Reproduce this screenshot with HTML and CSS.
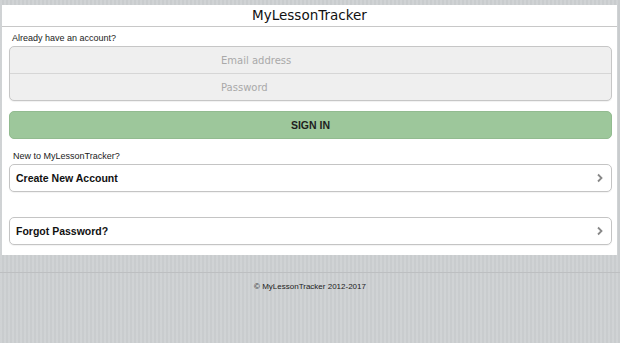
FILE: index.html
```html
<!DOCTYPE html>
<html lang="en">
<head>
<meta charset="UTF-8">
<meta name="viewport" content="width=device-width, initial-scale=1.0">
<title>MyLessonTracker</title>
<link rel="stylesheet" href="styles.css">
</head>
<body>
    <div class="page">
        <div class="header">
            <h1>MyLessonTracker</h1>
        </div>
        <div class="content">
            <p class="label">Already have an account?</p>
            <div class="input-group">
                <input type="text" class="field" placeholder="Email address">
                <input type="password" class="field" placeholder="Password">
            </div>
            <button class="btn-signin">SIGN IN</button>

            <p class="label label-new">New to MyLessonTracker?</p>
            <a class="list-btn" href="#">
                <span>Create New Account</span>
                <svg width="8" height="10" viewBox="0 0 8 10"><polyline points="2,1.5 5.5,5 2,8.5" fill="none" stroke="#888" stroke-width="1.8"/></svg>
            </a>
            <a class="list-btn list-btn-forgot" href="#">
                <span>Forgot Password?</span>
                <svg width="8" height="10" viewBox="0 0 8 10"><polyline points="2,1.5 5.5,5 2,8.5" fill="none" stroke="#888" stroke-width="1.8"/></svg>
            </a>
        </div>
    </div>
    <div class="footer">
        <p>&copy; MyLessonTracker 2012-2017</p>
    </div>
</body>
</html>
```

FILE: styles.css
```css
html, body{
    margin: 0;
    padding: 0;
}
body{
    background: #cdd0d2;
    background-image: repeating-linear-gradient(90deg, rgba(255,255,255,0.06) 0 2px, rgba(0,0,0,0.02) 2px 4px);
    font-family: "Liberation Sans", Arial, sans-serif;
    color: #222;
    height: 343px;
    overflow: hidden;
}
.page{
    background: #fff;
    margin: 5px 3px 0 2px;
    height: 250px;
}
.header{
    height: 21px;
    border-bottom: 1px solid #c8c8c8;
    text-align: center;
}
.header h1{
    margin: 0;
    font-family: "DejaVu Sans", sans-serif;
    font-weight: normal;
    font-size: 13.5px;
    line-height: 20px;
    color: #111;
}
.content{
    padding: 0 5px 0 7px;
}
.label{
    margin: 0;
    font-size: 9px;
    line-height: 11px;
    padding: 6px 0 2px 3px;
    color: #222;
}
.input-group{
    border: 1px solid #c6c6c6;
    border-radius: 5px;
    background: #efefef;
    overflow: hidden;
    box-shadow: 0 1px 1px rgba(0,0,0,0.06);
}
.field{
    display: block;
    width: 100%;
    box-sizing: border-box;
    height: 26px;
    padding: 0 0 0 211px;
    border: 0;
    background: transparent;
    text-align: left;
    font-family: "DejaVu Sans", sans-serif;
    font-size: 10px;
    outline: none;
}
.field + .field{
    height: 27px;
    border-top: 1px solid #d6d6d6;
}
.field::placeholder{
    color: #a9a9a9;
}
.btn-signin{
    display: block;
    width: 100%;
    margin-top: 10px;
    height: 28px;
    background: #9dc79b;
    border: 1px solid #92bb90;
    border-radius: 5px;
    font-family: "Liberation Sans", Arial, sans-serif;
    font-weight: bold;
    font-size: 10.5px;
    color: #1e1e1e;
}
.label-new{
    padding-top: 12px;
    padding-left: 4px;
}
.list-btn{
    display: flex;
    align-items: center;
    justify-content: space-between;
    height: 26px;
    padding: 0 7px 0 6px;
    border: 1px solid #c4c4c4;
    border-radius: 5px;
    background: #fff;
    text-decoration: none;
    color: #111;
    font-weight: bold;
    font-size: 10.5px;
    box-shadow: 0 1px 1px rgba(0,0,0,0.05);
}
.list-btn-forgot{
    margin-top: 25px;
}
.footer{
    margin-top: 17px;
    border-top: 1px solid #bdbfc1;
    text-align: center;
}
.footer p{
    margin: 0;
    padding-top: 9px;
    font-size: 8px;
    line-height: 10px;
    color: #222;
}
```
